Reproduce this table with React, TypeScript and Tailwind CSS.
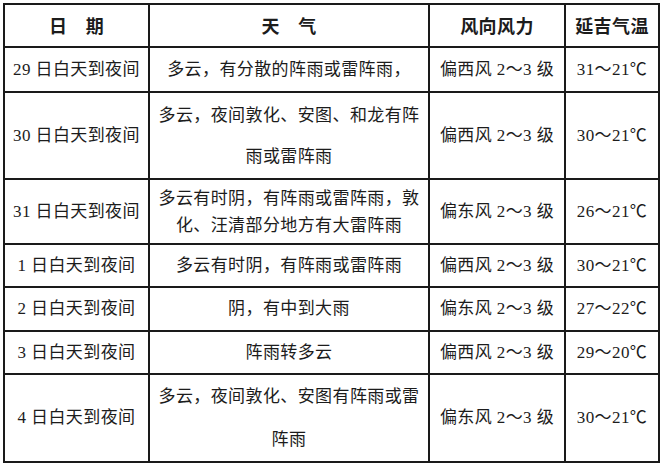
const ROWS: { date: string; weather: string[]; wind: string; temp: string; h: string; lead: string }[] = [
  { date: "29 日白天到夜间", weather: ["多云，有分散的阵雨或雷阵雨，"], wind: "偏西风 2～3 级", temp: "31～21℃", h: "h-[45px]", lead: "leading-[24px]" },
  { date: "30 日白天到夜间", weather: ["多云，夜间敦化、安图、和龙有阵", "雨或雷阵雨"], wind: "偏西风 2～3 级", temp: "30～21℃", h: "h-[87px]", lead: "leading-[41px]" },
  { date: "31 日白天到夜间", weather: ["多云有时阴，有阵雨或雷阵雨，敦", "化、汪清部分地方有大雷阵雨"], wind: "偏东风 2～3 级", temp: "26～21℃", h: "h-[65px]", lead: "leading-[27px]" },
  { date: "1 日白天到夜间", weather: ["多云有时阴，有阵雨或雷阵雨"], wind: "偏西风 2～3 级", temp: "30～21℃", h: "h-[43px]", lead: "leading-[24px]" },
  { date: "2 日白天到夜间", weather: ["阴，有中到大雨"], wind: "偏东风 2～3 级", temp: "27～22℃", h: "h-[44px]", lead: "leading-[24px]" },
  { date: "3 日白天到夜间", weather: ["阵雨转多云"], wind: "偏西风 2～3 级", temp: "29～20℃", h: "h-[43px]", lead: "leading-[24px]" },
  { date: "4 日白天到夜间", weather: ["多云，夜间敦化、安图有阵雨或雷", "阵雨"], wind: "偏东风 2～3 级", temp: "30～21℃", h: "h-[87px]", lead: "leading-[43px]" },
];

const cell = "border-2 border-[#1a1a1a] text-center align-middle p-0";

export default function App() {
  return (
    <div className="w-[664px] h-[467px] bg-white pt-[3px] pl-[3px] font-['Liberation_Serif','Noto_Sans_CJK_SC',serif] text-[#1c1c1c]">
      <table className="w-[655px] border-collapse table-fixed text-[17px] tracking-[0.4px]">
        <colgroup>
          <col className="w-[145px]" />
          <col className="w-[280px]" />
          <col className="w-[136px]" />
          <col className="w-[94px]" />
        </colgroup>
        <thead>
          <tr className="h-[43px] font-['Noto_Sans_CJK_SC',sans-serif] font-bold text-[18px]">
            <th className={cell}>日　期</th>
            <th className={cell}>天　气</th>
            <th className={cell}>风向风力</th>
            <th className={cell}>延吉气温</th>
          </tr>
        </thead>
        <tbody>
          {ROWS.map((r) => (
            <tr key={r.date} className={r.h}>
              <td className={cell}>{r.date}</td>
              <td className={`${cell} ${r.lead}`}>
                {r.weather.map((l) => (
                  <div key={l}>{l}</div>
                ))}
              </td>
              <td className={cell}>{r.wind}</td>
              <td className={cell}>{r.temp}</td>
            </tr>
          ))}
        </tbody>
      </table>
    </div>
  );
}
